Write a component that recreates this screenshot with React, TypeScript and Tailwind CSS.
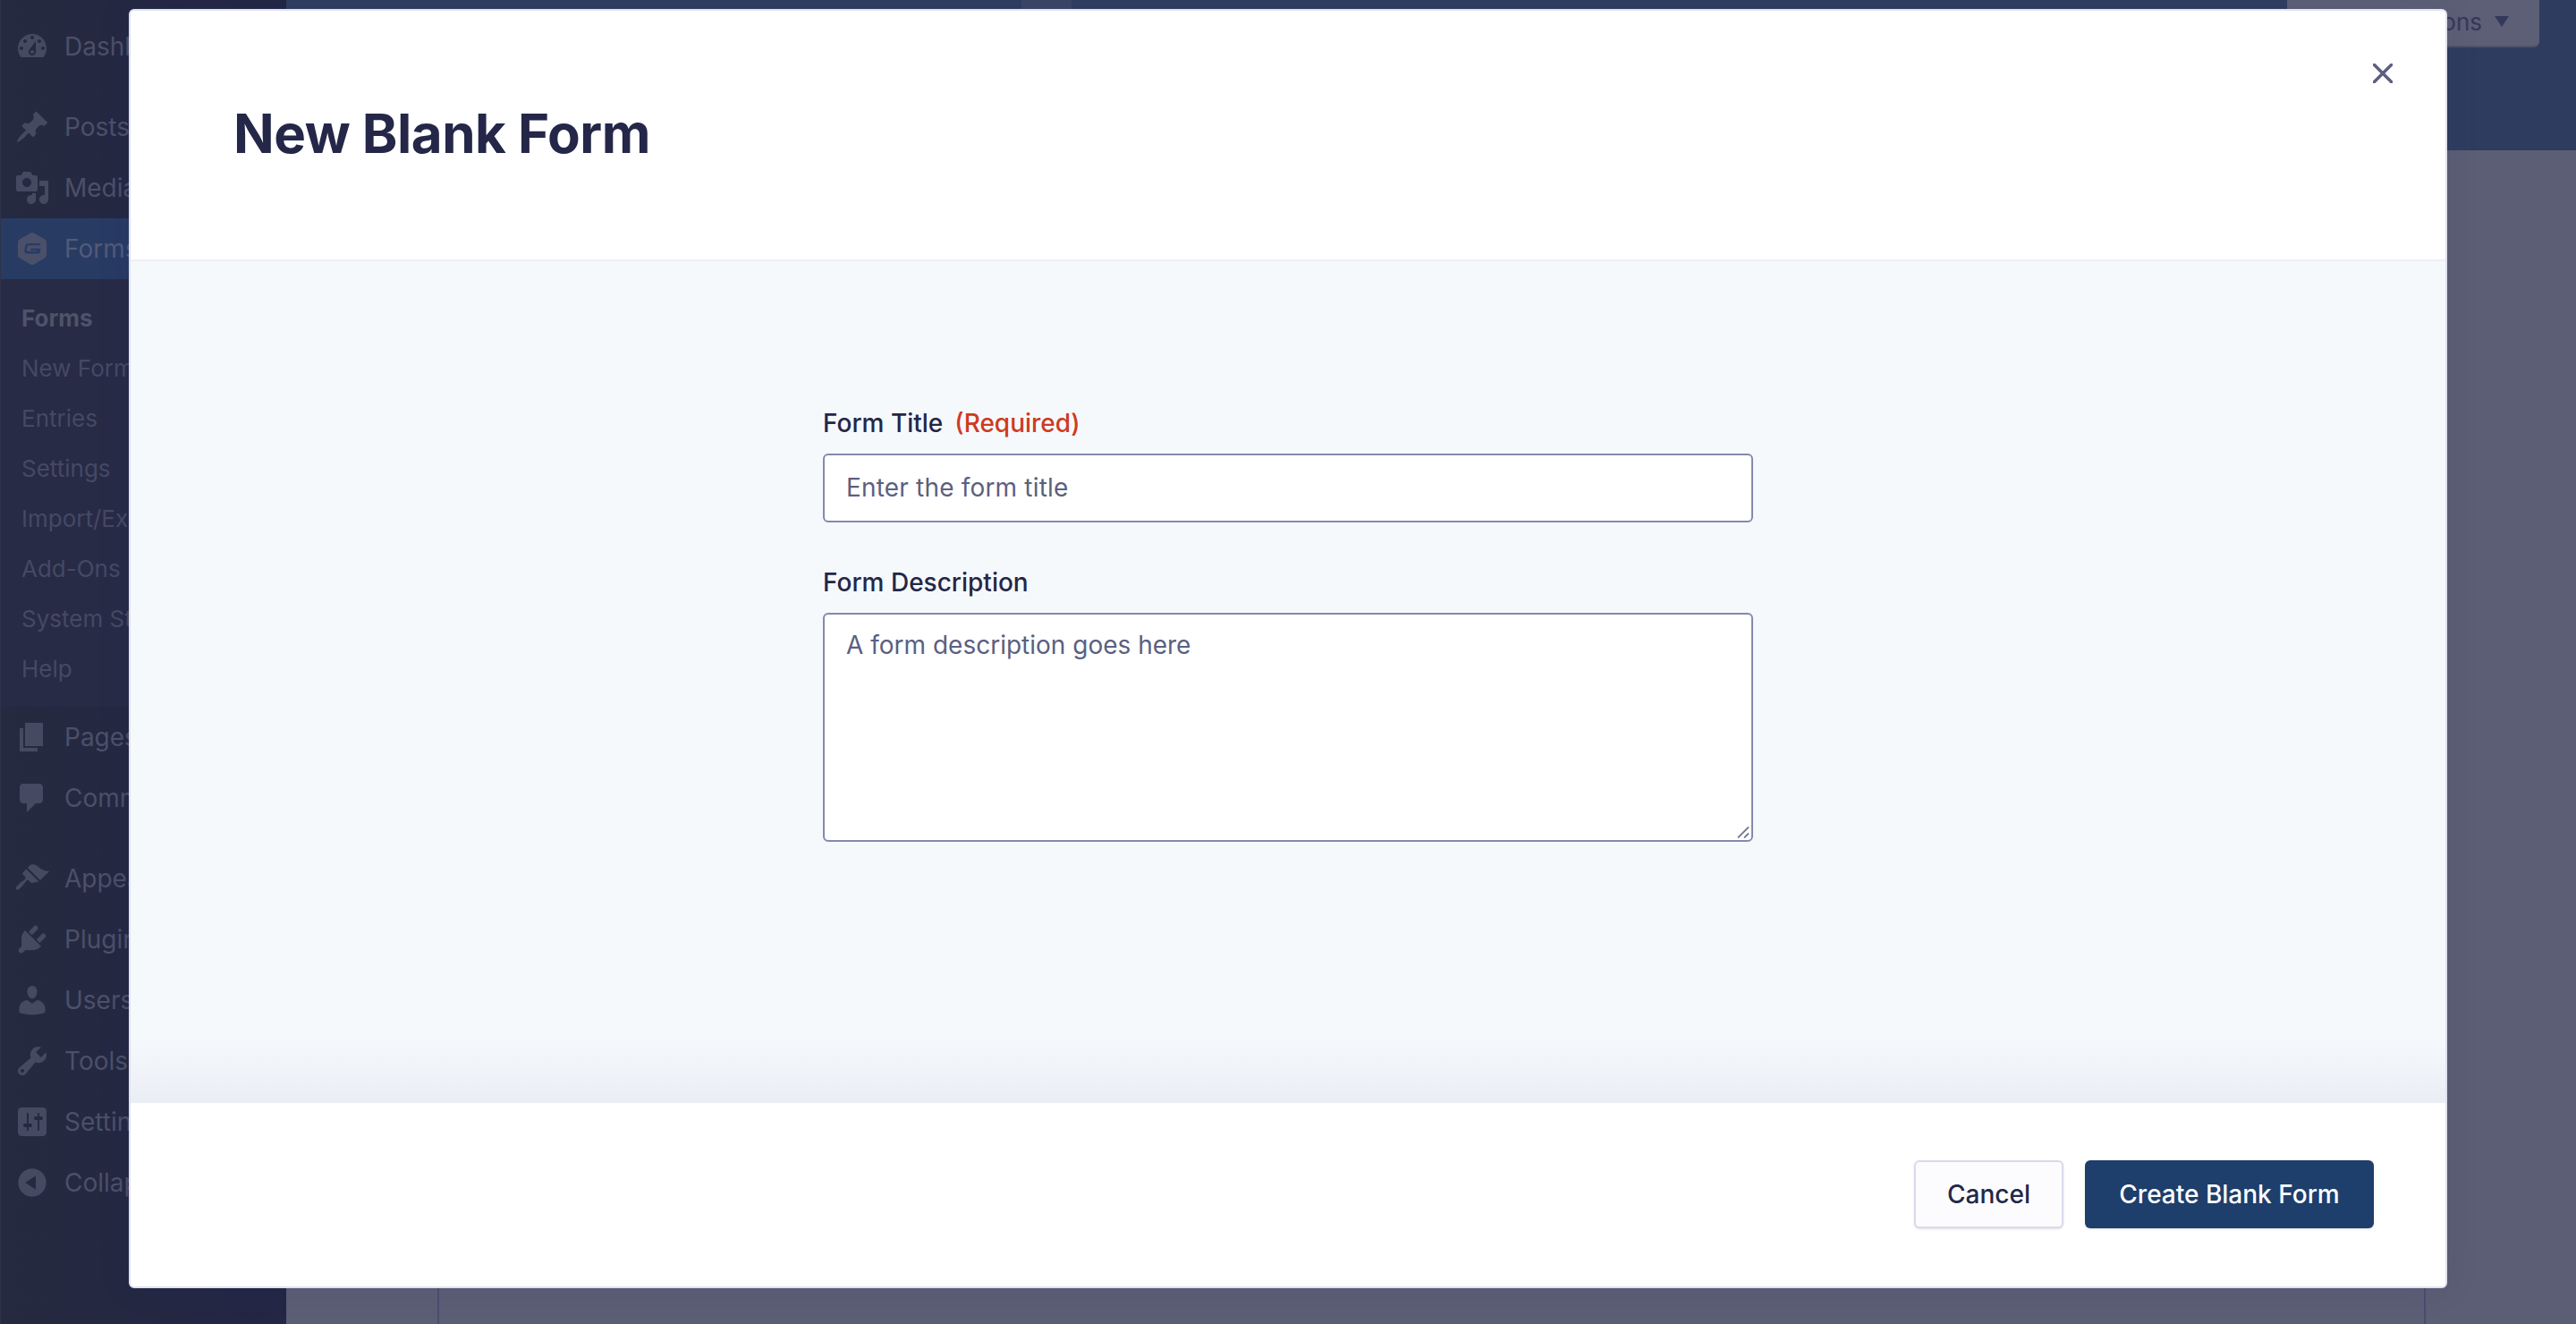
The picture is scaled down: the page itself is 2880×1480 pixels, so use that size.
import React from "react";

const P: Record<string, string> = {
  dashboard: "M3.76 16h12.48c1.1-1.37 1.76-3.11 1.76-5 0-4.42-3.58-8-8-8s-8 3.58-8 8c0 1.89.66 3.63 1.76 5zM10 4c.55 0 1 .45 1 1s-.45 1-1 1-1-.45-1-1 .45-1 1-1zM6 6c.55 0 1 .45 1 1s-.45 1-1 1-1-.45-1-1 .45-1 1-1zm8 0c.55 0 1 .45 1 1s-.45 1-1 1-1-.45-1-1 .45-1 1-1zm-5.37 5.55L12 7v6c0 1.1-.9 2-2 2s-2-.9-2-2c0-.57.24-1.08.63-1.45zM4 10c.55 0 1 .45 1 1s-.45 1-1 1-1-.45-1-1 .45-1 1-1zm12 0c.55 0 1 .45 1 1s-.45 1-1 1-1-.45-1-1 .45-1 1-1zm-5 3c0-.55-.45-1-1-1s-1 .45-1 1 .45 1 1 1 1-.45 1-1z",
  post: "M10.44 3.02l1.82-1.82 6.36 6.35-1.83 1.82c-1.05-.68-2.48-.57-3.41.36l-.75.75c-.92.93-1.04 2.35-.35 3.41l-1.83 1.82-2.41-2.41-2.8 2.79c-.42.42-3.38 2.71-3.8 2.29s1.86-3.39 2.28-3.81l2.79-2.79L4.1 9.36l1.83-1.82c1.05.69 2.48.57 3.41-.36l.75-.75c.93-.92 1.04-2.35.35-3.41z",
  media: "M13 11V4c0-.55-.45-1-1-1h-1.67L9 1H5L3.67 3H2c-.55 0-1 .45-1 1v7c0 .55.45 1 1 1h10c.55 0 1-.45 1-1zM7 4.5c1.38 0 2.5 1.12 2.5 2.5S8.38 9.5 7 9.5 4.5 8.38 4.5 7 5.62 4.5 7 4.5zM14 6h5v10.5c0 1.38-1.12 2.5-2.5 2.5S14 17.88 14 16.5s1.12-2.5 2.5-2.5c.17 0 .34.02.5.05V9h-3V6zm-4 8.05V13h2v3.5c0 1.38-1.12 2.5-2.5 2.5S7 17.88 7 16.5 8.12 14 9.5 14c.17 0 .34.02.5.05z",
  page: "M6 15V2h10v13H6zm-1 1h8v2H3V5h2v11z",
  comments: "M5 2h9c1.1 0 2 .9 2 2v7c0 1.1-.9 2-2 2h-2l-5 5v-5H5c-1.1 0-2-.9-2-2V4c0-1.1.9-2 2-2z",
  appearance: "M14.48 11.06L7.41 3.99l1.5-1.5c.5-.56 2.3-.47 3.51.32 1.21.8 1.43 1.28 2.91 2.1 1.18.64 2.45 1.26 4.45.85zm-.71.71L6.7 4.7 4.93 6.47c-.39.39-.39 1.02 0 1.41l1.06 1.06c.39.39.39 1.03 0 1.42-.6.6-1.43 1.11-2.21 1.69-.35.26-.7.53-1.01.84-1.34 1.34-2.37 2.51-1.67 3.21s1.87-.33 3.21-1.67c.31-.31.58-.66.84-1.01.58-.78 1.09-1.61 1.69-2.21.39-.39 1.03-.39 1.42 0l1.06 1.06c.39.39 1.02.39 1.41 0z",
  plugins: "M13.11 4.36L9.87 7.6 8 5.73l3.24-3.24c.35-.34 1.05-.2 1.56.32.52.51.66 1.21.31 1.55zm-8 1.77l.91-1.12 9.01 9.01-1.19.84c-.71.71-2.63 1.16-3.82 1.16H6.14L4.9 17.26c-.59.59-1.54.59-2.12 0-.59-.58-.59-1.53 0-2.12l1.24-1.24v-3.88c0-1.13.4-3.19 1.09-3.89zm7.26 3.97l3.24-3.24c.34-.35 1.04-.21 1.55.31.52.51.66 1.21.31 1.55l-3.24 3.25z",
  users: "M10 9.25c-2.27 0-2.73-3.44-2.73-3.44C7 4.02 7.82 2 9.97 2c2.16 0 2.98 2.02 2.71 3.81 0 0-.41 3.44-2.68 3.44zm0 2.57L12.72 10c2.39 0 4.52 2.33 4.52 4.53v2.49s-3.65 1.13-7.24 1.13c-3.65 0-7.24-1.13-7.24-1.13v-2.49c0-2.25 1.94-4.48 4.47-4.48z",
  tools: "M16.68 9.77c-1.34 1.34-3.3 1.67-4.95.99l-5.41 6.52c-.99.99-2.59.99-3.58 0s-.99-2.59 0-3.57l6.52-5.42c-.68-1.65-.35-3.61.99-4.95 1.28-1.28 3.12-1.62 4.72-1.06l-2.89 2.89 2.82 2.82 2.86-2.87c.53 1.58.18 3.39-1.08 4.65zM3.81 16.21c.4.39 1.04.39 1.43 0 .4-.4.4-1.04 0-1.43-.39-.4-1.03-.4-1.43 0-.39.39-.39 1.03 0 1.43z",
  settings: "M18 16V4c0-1.1-.9-2-2-2H4c-1.1 0-2 .9-2 2v12c0 1.1.9 2 2 2h12c1.1 0 2-.9 2-2zM8 11h1c.55 0 1 .45 1 1s-.45 1-1 1H8v1.5c0 .28-.22.5-.5.5s-.5-.22-.5-.5V13H6c-.55 0-1-.45-1-1s.45-1 1-1h1V5.5c0-.28.22-.5.5-.5s.5.22.5.5V11zm5-2h-1c-.55 0-1-.45-1-1s.45-1 1-1h1V5.5c0-.28.22-.5.5-.5s.5.22.5.5V7h1c.55 0 1 .45 1 1s-.45 1-1 1h-1v5.5c0 .28-.22.5-.5.5s-.5-.22-.5-.5V9z",
  collapse: "M10 2.16c4.33 0 7.84 3.51 7.84 7.84s-3.51 7.84-7.84 7.84S2.16 14.33 2.16 10 5.71 2.16 10 2.16zm2 11.72V6.12L6.18 9.97z",
};

function Icon({ name }: { name: string }) {
  return (
    <svg viewBox="0 0 20 20" className="w-10 h-10 shrink-0 fill-[#454a62]">
      <path d={P[name]} fillRule="evenodd" />
    </svg>
  );
}

function GfIcon() {
  return (
    <svg viewBox="0 0 40 40" className="w-10 h-10 shrink-0">
      <path d="M18 2.6c1.2-.7 2.8-.7 4 0l12 6.9c1.2.7 2 2 2 3.4v14.2c0 1.4-.8 2.7-2 3.4l-12 6.9c-1.2.7-2.8.7-4 0L6 30.5c-1.2-.7-2-2-2-3.4V12.9c0-1.4.8-2.7 2-3.4z" fill="#4a5069" />
      <path d="M29 14H16c-2 0-3.4 1.2-3.8 3l-1 5c-.4 2 .9 3.6 3 3.6h12.6c1 0 1.6-.5 1.8-1.4l.8-4.4H18.5l-.4 2h6.8l-.2 1H15c-1 0-1.4-.5-1.2-1.4l.8-3.8c.2-.9.8-1.4 1.8-1.4h12.6z" fill="#283b63" />
    </svg>
  );
}

function Item({ icon, label, gf, active }: { icon?: string; label: string; gf?: boolean; active?: boolean }) {
  return (
    <div className={`h-[68px] shrink-0 flex items-center pl-[15px] gap-4 whitespace-nowrap ${active ? "bg-[#283b63] text-[#525a78]" : "text-[#4c5069]"}`}>
      {gf ? <GfIcon /> : <Icon name={icon as string} />}
      <span className="text-[28px] leading-none">{label}</span>
    </div>
  );
}

function Sub({ label, bold }: { label: string; bold?: boolean }) {
  return (
    <div className={`h-14 flex items-center pl-[23px] text-[26px] whitespace-nowrap ${bold ? "font-bold text-[#4f5369]" : "text-[#454963]"}`}>
      {label}
    </div>
  );
}

export default function App() {
  return (
    <div className="relative w-[2880px] h-[1480px] overflow-hidden flex bg-[#5b5e74] font-['Inter',sans-serif]">
      {/* admin sidebar */}
      <aside className="w-80 shrink-0 h-full overflow-hidden flex flex-col pt-[18px] border-l border-[#2f334a] bg-gradient-to-r from-[#252a40] to-[#232644]">
        <Item icon="dashboard" label="Dashboard" />
        <div className="h-[22px] shrink-0" />
        <Item icon="post" label="Posts" />
        <Item icon="media" label="Media" />
        <Item gf active label="Forms" />
        <div className="bg-[#272b46] pt-[15px] pb-[15px] shrink-0">
          <Sub bold label="Forms" />
          <Sub label="New Form" />
          <Sub label="Entries" />
          <Sub label="Settings" />
          <Sub label="Import/Export" />
          <Sub label="Add-Ons" />
          <Sub label="System Status" />
          <Sub label="Help" />
        </div>
        <Item icon="page" label="Pages" />
        <Item icon="comments" label="Comments" />
        <div className="h-[22px] shrink-0" />
        <Item icon="appearance" label="Appearance" />
        <Item icon="plugins" label="Plugins" />
        <Item icon="users" label="Users" />
        <Item icon="tools" label="Tools" />
        <Item icon="settings" label="Settings" />
        <Item icon="collapse" label="Collapse" />
      </aside>

      {/* page behind the dialog */}
      <main className="flex-1 flex flex-col">
        <header className="h-[168px] shrink-0 bg-[#2e3d5f] flex items-start">
          <div className="ml-[822px] w-14 h-3 bg-[#3a4565]" />
          <div className="ml-auto mr-[41px] w-[282px] h-[53px] bg-[#5c5f75] rounded-b-md border-b-2 border-[#4f5269] flex items-center justify-end pr-[34px] pb-[3px] gap-[14px] text-[26px] text-[#34385a]">
            <span>Screen Options</span>
            <span className="w-0 h-0 border-x-8 border-t-[12px] border-x-transparent border-t-[#34385a]" />
          </div>
        </header>
        <div className="flex-1 ml-[169px] mr-[168px] border-x-2 border-[#4a4d6c]" />
      </main>

      {/* dialog */}
      <div className="absolute left-36 top-[10px] w-[2592px] h-[1430px] bg-white rounded-md border-2 border-[#dfe2f0] flex flex-col shadow-[0_0_40px_rgba(40,40,130,0.08)]">
        <div className="h-[280px] shrink-0 border-b-2 border-[#eef0f8] flex items-center pl-[115px] relative">
          <h1 className="text-[60px] leading-none font-bold tracking-[-0.5px] text-[#242748] -mt-[4px]">New Blank Form</h1>
          <button className="absolute right-[59px] top-[59px] text-[#5d5f82]">
            <svg viewBox="0 0 22 22" className="w-[22px] h-[22px] block">
              <path d="M1.5 1.5l19 19M20.5 1.5l-19 19" stroke="currentColor" strokeWidth="3.5" strokeLinecap="round" fill="none" />
            </svg>
          </button>
        </div>

        <div className="flex-1 bg-[#f6f9fc] flex flex-col items-center pt-[159px] relative">
          <div className="w-[1040px] flex flex-col relative">
            <label className="h-[44px] flex items-center gap-[13px] text-[28px] font-medium text-[#242748] leading-none mb-[12px]">
              <span>Form Title</span>
              <span className="text-[#cf3a22]">(Required)</span>
            </label>
            <input
              readOnly
              placeholder="Enter the form title"
              className="h-[77px] w-full bg-white border-2 border-[#8589ab] rounded-md px-6 pb-[1px] text-[28px] tracking-[0.18px] placeholder:text-[#5b6080] outline-none"
            />
            <label className="h-[44px] flex items-center text-[28px] font-medium text-[#242748] leading-none mt-[45px] mb-[12px]">
              Form Description
            </label>
            <div className="relative h-[256px]">
              <textarea
                readOnly
                placeholder="A form description goes here"
                className="block h-full w-full resize-none bg-white border-2 border-[#8589ab] rounded-md px-6 pt-[16px] text-[28px] leading-[36px] placeholder:text-[#5b6080] outline-none"
              />
              <svg viewBox="0 0 14 14" className="absolute right-[4px] bottom-[4px] w-[14px] h-[14px] pointer-events-none">
                <path d="M1 13.5L13 1.5M8 13.5l5-5" stroke="#77788a" strokeWidth="1.8" fill="none" />
              </svg>
            </div>
          </div>
          <div className="absolute left-0 right-0 bottom-0 h-[73px] bg-gradient-to-b from-[#f6f9fc] to-[#ebedf5]" />
        </div>

        <div className="h-[205px] shrink-0 flex items-center justify-end gap-[24px] pr-[80px] pb-[2px]">
          <button className="w-[167px] h-[76px] bg-[#fcfcfe] border-2 border-[#d9dbec] rounded-md text-[28px] font-medium text-[#242748] shadow-sm">
            Cancel
          </button>
          <button className="w-[323px] h-[76px] bg-[#1e3e6b] rounded-md text-[28px] font-medium text-white shadow-sm">
            Create Blank Form
          </button>
        </div>
      </div>
    </div>
  );
}
